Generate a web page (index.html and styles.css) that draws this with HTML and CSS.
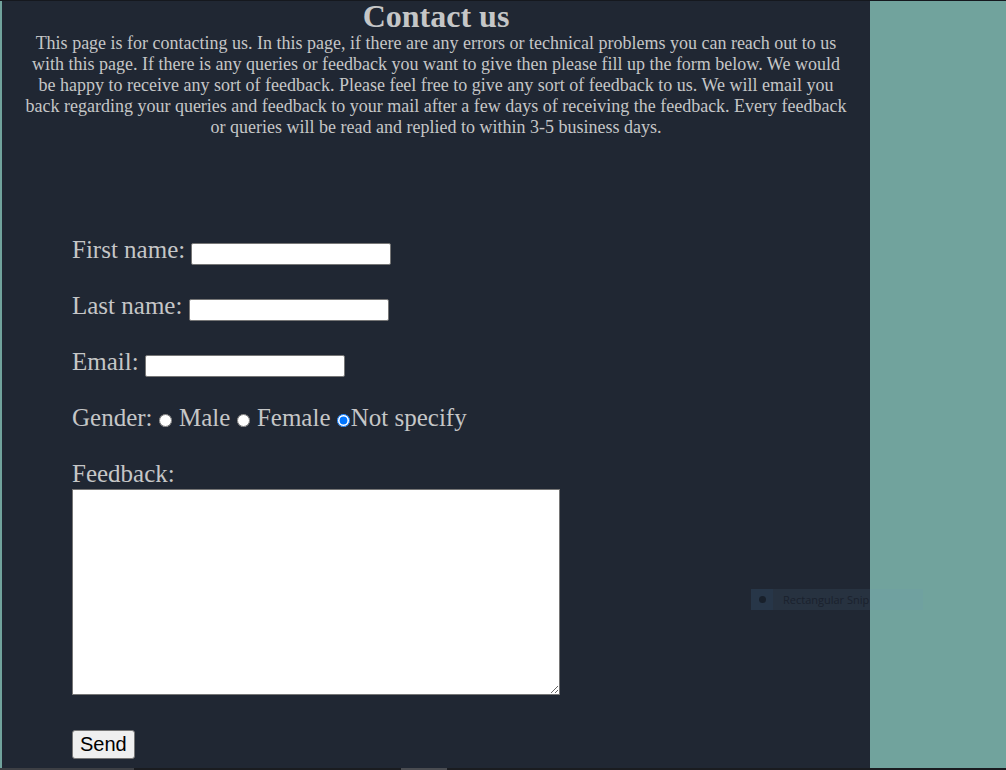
FILE: index.html
```html
<!DOCTYPE html>
<html>
<head>
<meta charset="utf-8">
<title>Contact us</title>
<link rel="stylesheet" href="styles.css">
</head>
<body>
<div class="topline"></div>
<div class="layout">
  <div class="edge"></div>
  <main class="panel">
    <h1 class="title">Contact us</h1>
    <p class="intro">This page is for contacting us. In this page, if there are any errors or technical problems you can reach out to us with this page. If there is any queries or feedback you want to give then please fill up the form below. We would be happy to receive any sort of feedback. Please feel free to give any sort of feedback to us. We will email you back regarding your queries and feedback to your mail after a few days of receiving the feedback. Every feedback or queries will be read and replied to within 3-5 business days.</p>
    <form class="form">
      <div class="row">First name: <input class="field" type="text"></div>
      <div class="row">Last name: <input class="field" type="text"></div>
      <div class="row">Email: <input class="field" type="email"></div>
      <div class="row">Gender: <input class="radio" type="radio" name="g"> Male <input class="radio" type="radio" name="g"> Female <input class="radio" type="radio" name="g" checked>Not specify</div>
      <div class="row last">Feedback:</div>
      <textarea class="feedback"></textarea>
      <button class="send" type="button">Send</button>
    </form>
  </main>
  <div class="side"></div>
</div>
<div class="bottom"><span class="seg1"></span><span class="seg2"></span></div>
<div class="snip"><span class="snip-icon"><span class="dot"></span></span><span class="snip-text">Rectangular Snip</span></div>
</body>
</html>
```
FILE: styles.css
```css
html, body {
  margin: 0;
  padding: 0;
  height: 100%;
}
body {
  background: #71a39d;
  display: flex;
  flex-direction: column;
  overflow: hidden;
  font-family: "Liberation Serif", "Times New Roman", serif;
  color: #c5c6c7;
}
.topline {
  height: 1px;
  background: #15181e;
  flex: none;
}
.layout {
  flex: 1;
  display: flex;
  min-height: 0;
}
.edge {
  width: 2px;
  background: #71a39d;
  flex: none;
}
.panel {
  width: 868px;
  flex: none;
  background: #202733;
}
.side {
  flex: 1;
  background: #71a39d;
}
.title {
  margin: 0;
  text-align: center;
  font-size: 32px;
  line-height: 30px;
  font-weight: bold;
}
.intro {
  margin: 2px 22px 0 22px;
  text-align: center;
  font-size: 18px;
  line-height: 21px;
}
.form {
  margin: 98px 0 0 70px;
  font-size: 25px;
}
.row {
  height: 28px;
  line-height: 28px;
  margin-bottom: 28px;
  white-space: nowrap;
}
.row.last {
  margin-bottom: 0;
}
.field {
  box-sizing: border-box;
  width: 200px;
  height: 22px;
  margin: 7px 0 0 0;
  vertical-align: top;
  border: 1px solid #767676;
  border-radius: 2px;
  background: #fff;
  padding: 1px 2px;
  font-size: 13px;
}
.radio {
  width: 13px;
  height: 13px;
  margin: 0 0.5px 0 0.5px;
  vertical-align: -1px;
}
.feedback {
  display: block;
  box-sizing: border-box;
  width: 488px;
  height: 206px;
  margin: 1px 0 0 0;
  border: 1px solid #767676;
  background: #fff;
}
.send {
  display: block;
  margin-top: 35px;
  box-sizing: border-box;
  height: 29px;
  padding: 0 7px;
  font-family: "Liberation Sans", Arial, sans-serif;
  font-size: 20px;
  color: #000;
  background: #efefef;
  border: 1px solid #767676;
  border-radius: 3px;
}
.bottom {
  height: 2px;
  flex: none;
  background: #1a1c20;
  position: relative;
}
.seg1 {
  position: absolute;
  left: 0;
  top: 0;
  width: 134px;
  height: 2px;
  background: #3d3f44;
}
.seg2 {
  position: absolute;
  left: 401px;
  top: 0;
  width: 46px;
  height: 2px;
  background: #4a4c51;
}
.snip {
  position: absolute;
  left: 751px;
  top: 589px;
  width: 172px;
  height: 21px;
  background: rgba(110, 150, 185, 0.10);
  display: flex;
  align-items: center;
  font-family: "Open Sans", "Noto Sans", sans-serif;
  font-size: 11px;
}
.snip-icon {
  width: 22px;
  height: 21px;
  background: rgba(40, 80, 120, 0.15);
  display: flex;
  align-items: center;
  justify-content: center;
}
.dot {
  width: 7px;
  height: 7px;
  border-radius: 50%;
  background: #18202b;
}
.snip-text {
  margin-left: 10px;
  color: #1a212d;
}
```
